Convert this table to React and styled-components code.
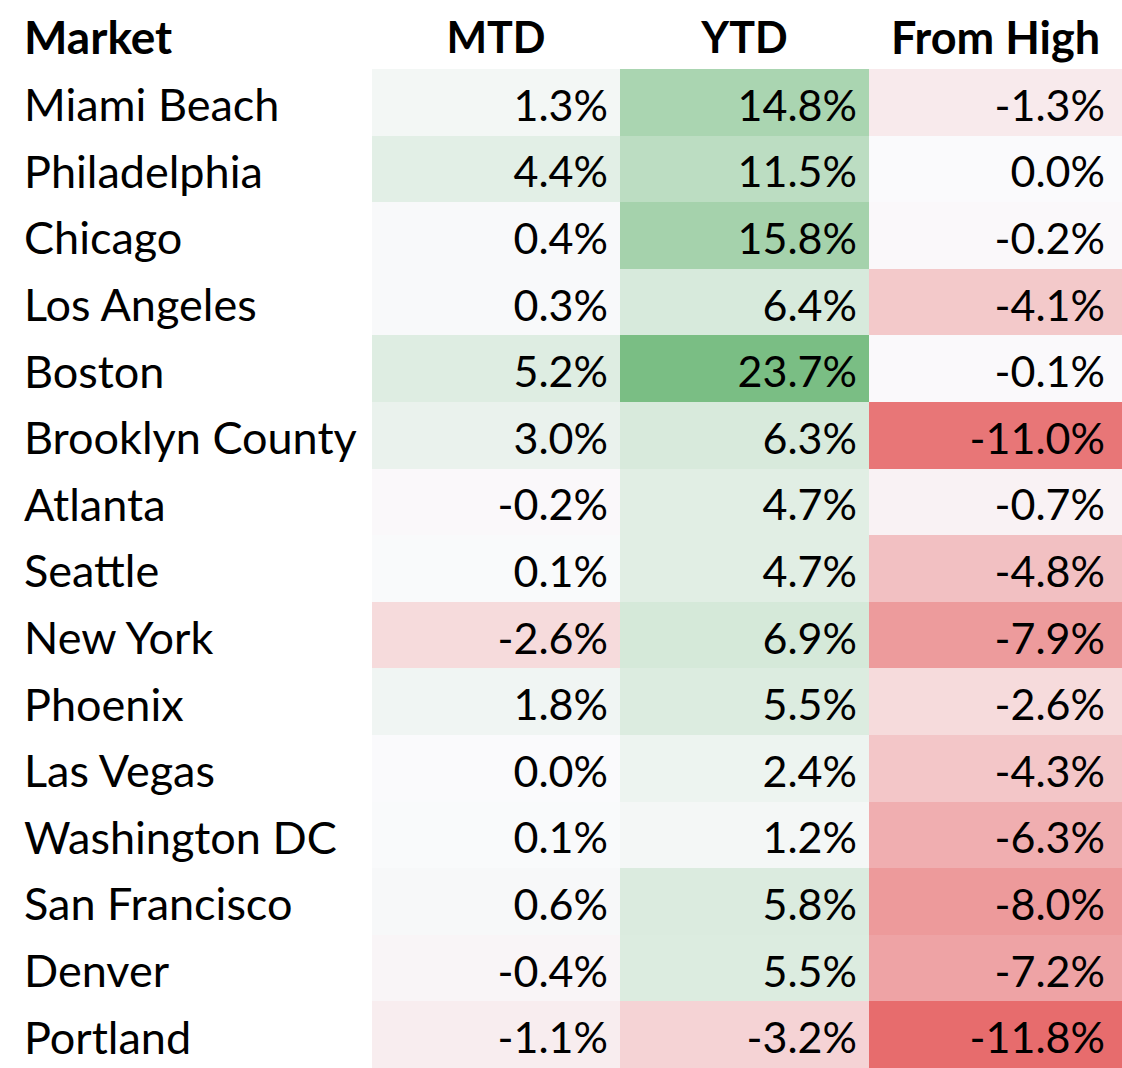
import React from 'react'
import styled, { createGlobalStyle } from 'styled-components'

const GlobalStyle = createGlobalStyle`
  html, body {
    margin: 0;
    padding: 0;
    background: #ffffff;
  }
  body {
    font-family: Lato, "Open Sans", sans-serif;
    color: #000000;
  }
`

const Table = styled.div`
  width: 1122px;
  height: 1068px;
  display: grid;
  grid-template-columns: 372px 248px 249px 253px;
  grid-template-rows: 69px repeat(15, 1fr);
  font-size: 43px;
`

const HeadCell = styled.div`
  display: flex;
  align-items: center;
  justify-content: ${({ $left }) => ($left ? 'flex-start' : 'center')};
  padding-left: ${({ $left }) => ($left ? '24px' : '0')};
  padding-top: 4px;
  font-size: ${({ $size }) => $size || 43}px;
  font-weight: 700;
`

const NameCell = styled.div`
  display: flex;
  align-items: center;
  padding-left: 24px;
  padding-top: 4px;
  font-size: 45px;
  white-space: nowrap;
`

const ValueCell = styled.div`
  display: flex;
  align-items: center;
  justify-content: flex-end;
  padding-right: ${({ $pad }) => $pad}px;
  padding-top: 4px;
  background: ${({ $bg }) => $bg};
`

const rows = [
  ['Miami Beach', 1.3, 14.8, -1.3],
  ['Philadelphia', 4.4, 11.5, 0.0],
  ['Chicago', 0.4, 15.8, -0.2],
  ['Los Angeles', 0.3, 6.4, -4.1],
  ['Boston', 5.2, 23.7, -0.1],
  ['Brooklyn County', 3.0, 6.3, -11.0],
  ['Atlanta', -0.2, 4.7, -0.7],
  ['Seattle', 0.1, 4.7, -4.8],
  ['New York', -2.6, 6.9, -7.9],
  ['Phoenix', 1.8, 5.5, -2.6],
  ['Las Vegas', 0.0, 2.4, -4.3],
  ['Washington DC', 0.1, 1.2, -6.3],
  ['San Francisco', 0.6, 5.8, -8.0],
  ['Denver', -0.4, 5.5, -7.2],
  ['Portland', -1.1, -3.2, -11.8]
]

// three-colour scale shared by all value cells
const GREEN = [122, 190, 132]
const RED = [231, 108, 109]
const MID = [250, 250, 252]
const MAX = 23.7
const MIN = -11.8

function heat(v) {
  const target = v >= 0 ? GREEN : RED
  const t = v >= 0 ? v / MAX : v / MIN
  const c = MID.map((m, i) => Math.round(m + (target[i] - m) * t))
  return `rgb(${c[0]}, ${c[1]}, ${c[2]})`
}

const pads = [12, 12, 17]

export default function App() {
  return (
    <>
      <GlobalStyle />
      <Table>
        <HeadCell $left $size={46}>Market</HeadCell>
        <HeadCell>MTD</HeadCell>
        <HeadCell>YTD</HeadCell>
        <HeadCell $size={45}>From High</HeadCell>
        {rows.map(([name, ...vals]) => (
          <React.Fragment key={name}>
            <NameCell>{name}</NameCell>
            {vals.map((v, j) => (
              <ValueCell key={j} $bg={heat(v)} $pad={pads[j]}>
                {v.toFixed(1)}%
              </ValueCell>
            ))}
          </React.Fragment>
        ))}
      </Table>
    </>
  )
}
